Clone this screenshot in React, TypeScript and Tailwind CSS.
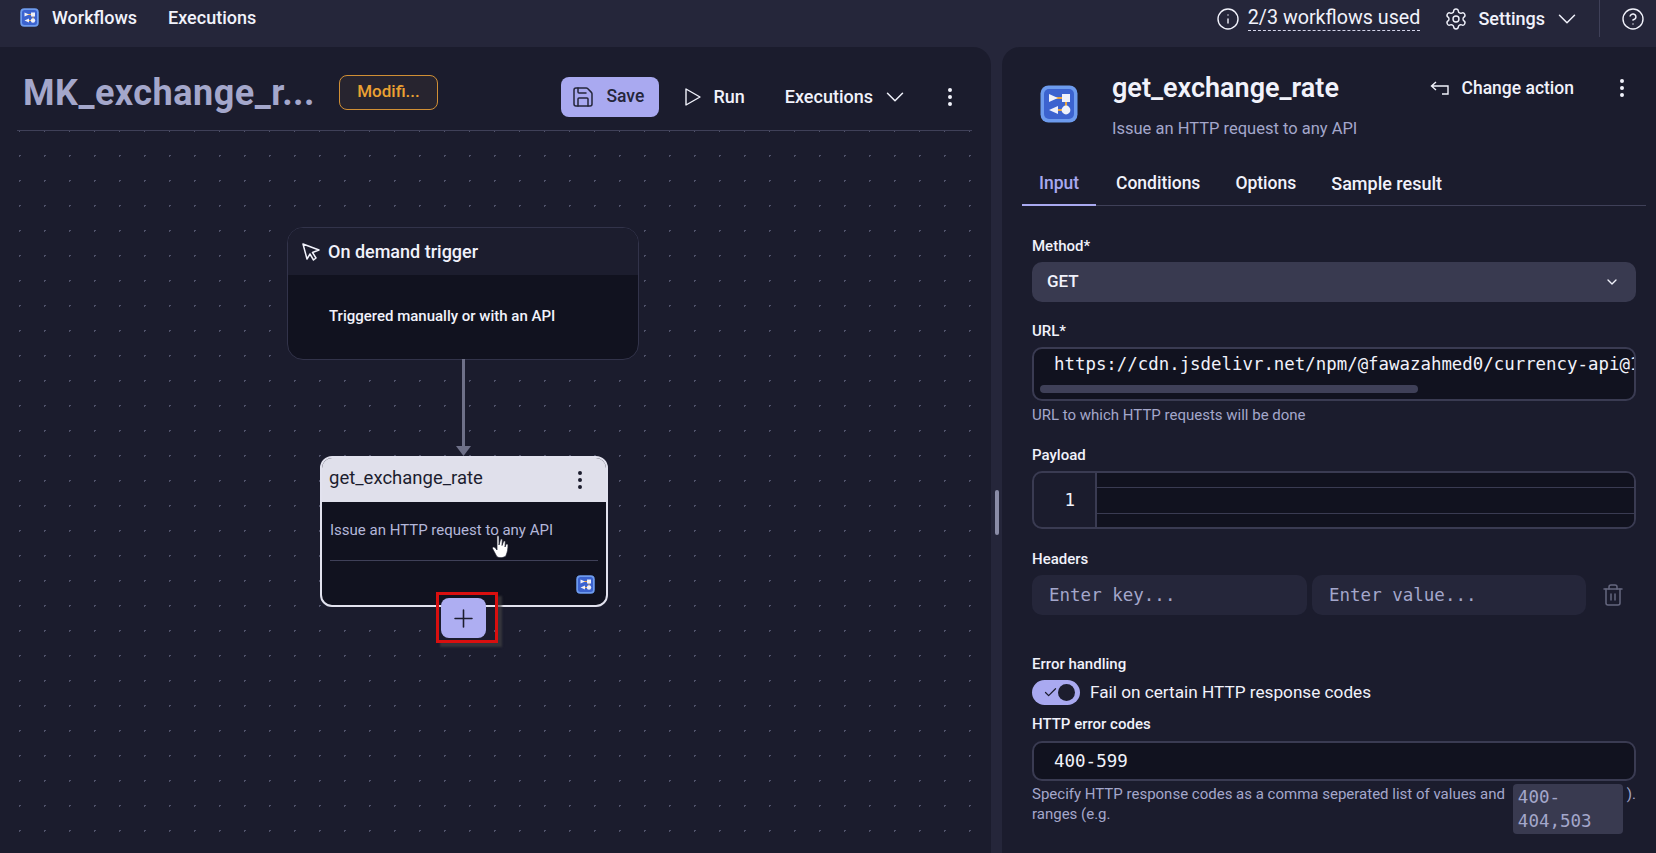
import { Check, ChevronDown, CircleHelp, EllipsisVertical, Info, Plus, Save, Settings, Trash2 } from 'lucide-react'

const sans = "font-['Roboto','Noto_Sans',sans-serif]"
const mono = "font-['DejaVu_Sans_Mono','Liberation_Mono',monospace]"

function Logo({ className }: { className: string }) {
  return (
    <svg className={className} viewBox="0 0 38 38">
      <rect x="0.5" y="0.5" width="37" height="37" rx="8" fill="#6d9bee" />
      <rect x="4" y="4" width="30" height="30" rx="5" fill="#3c63cf" />
      <path d="M15 13H24M26 16V24M15 25H24" stroke="#e8a33d" strokeWidth="2" fill="none" />
      <path d="M9 9L18 13L9 17Z" fill="#eef1fb" />
      <rect x="22" y="9" width="8" height="8" fill="#eef1fb" />
      <path d="M18 21L9 25L18 29Z" fill="#eef1fb" />
      <circle cx="26" cy="25" r="4.4" fill="#eef1fb" />
    </svg>
  )
}

function TopBar() {
  return (
    <div className="flex h-[47px] shrink-0 items-start bg-[#25263a] text-[#f1f2fb]">
      <div className="flex h-[35px] items-center pl-[20px]">
        <Logo className="h-[19px] w-[19px]" />
        <span className="ml-[13px] text-[18px] font-medium">Workflows</span>
        <span className="ml-[31px] text-[18px] font-medium">Executions</span>
      </div>
      <div className="ml-auto flex h-[37px] items-center">
        <Info className="h-[24px] w-[24px]" strokeWidth={1.4} />
        <span className="ml-[8px] border-b border-dashed border-[#d5d6ea] text-[19.7px] leading-[24px]">2/3 workflows used</span>
        <Settings className="ml-[24px] h-[24px] w-[24px]" strokeWidth={1.4} />
        <span className="ml-[10px] text-[18px] font-medium">Settings</span>
        <ChevronDown className="ml-[7px] h-[30px] w-[30px]" strokeWidth={1.2} />
        <div className="ml-[17px] h-[37px] w-px bg-[#3f4058]" />
        <CircleHelp className="ml-[21px] mr-[11px] h-[24px] w-[24px]" strokeWidth={1.4} />
      </div>
    </div>
  )
}

function TriggerNode() {
  return (
    <div className="absolute left-[287px] top-[96px] h-[133px] w-[352px] overflow-hidden rounded-[16px] border border-[#32334a] bg-[#11121f]">
      <div className="flex h-[47px] items-center bg-[#1c1d2e] pl-[13px] text-[#f1f2fb]">
        <svg className="h-[20px] w-[20px]" viewBox="0 0 20 20" fill="none" stroke="currentColor" strokeWidth="1.5">
          <path d="M2 2L18 8L11.5 10.5L15 16L12.5 18L9 12L6 17Z" strokeLinejoin="round" />
        </svg>
        <span className="ml-[7px] text-[18px] font-medium">On demand trigger</span>
      </div>
      <div className="pl-[41px] pt-[30px] text-[15px] font-medium text-[#f1f2fb]">Triggered manually or with an API</div>
    </div>
  )
}

function ActionNode() {
  return (
    <div className="absolute left-[320px] top-[325px] h-[151px] w-[288px] overflow-hidden rounded-[12px] border-2 border-[#e2e2ee] bg-[#11121f]">
      <div className="flex h-[44px] items-center justify-between bg-[#e0e0eb] pl-[7px] pr-[14px] text-[#1c1d2e]">
        <span className="pb-[3px] text-[18.5px]">get_exchange_rate</span>
        <EllipsisVertical className="h-[24px] w-[24px]" />
      </div>
      <div className="mx-[8px] border-b border-[#3f4058] pb-[20px] pt-[18px] text-[15px] leading-[20px] text-[#b4b7da]">Issue an HTTP request to any API</div>
      <div className="flex justify-end pr-[11px] pt-[14px]">
        <Logo className="h-[19px] w-[19px]" />
      </div>
    </div>
  )
}

function Canvas() {
  return (
    <div className="relative flex-1 bg-[radial-gradient(#50526a_1px,transparent_1px)] bg-[size:25px_25px] bg-[position:7px_12px]">
      <TriggerNode />
      <div className="absolute left-[462px] top-[228px] h-[90px] w-[3px] bg-[#6e7088]" />
      <svg className="absolute left-[456px] top-[315px] h-[10px] w-[15px]" viewBox="0 0 15 10">
        <path d="M0 0H15L7.5 10Z" fill="#6e7088" />
      </svg>
      <ActionNode />
      <div className="absolute left-[436px] top-[461px] flex h-[51px] w-[62px] items-start border-[3px] border-[#d90f0f] pl-[2px] pt-[3px] shadow-[4px_4px_2px_rgba(70,70,70,0.6)]">
        <div className="flex h-[40px] w-[45px] items-center justify-center rounded-[8px] bg-[#aeaef2] text-[#1c1d2e]">
          <Plus className="h-[29px] w-[29px]" strokeWidth={1.3} />
        </div>
      </div>
      {/* mouse pointer caught in the screenshot */}
      <svg className="absolute left-[492px] top-[404px] h-[24px] w-[17px]" viewBox="0 0 17 24">
        <path d="M5 1.5C5 .5 7 .5 7 1.5V10L8.5 4.5C9 3.5 10.5 4 10.3 5L10 10.5L11.5 6.5C12 5.5 13.5 6 13.3 7L13 12L14 9.5C14.5 8.7 16 9 16 10C16 14 15.5 17 14 20.5C13 23 5.5 23.5 4.5 21L.5 13.5C0 12 2 11.5 3 12.5L5 15Z" fill="#ffffff" stroke="#1b1c2d" strokeWidth="0.7" />
      </svg>
    </div>
  )
}

function LeftPanel() {
  return (
    <div className="flex w-[991px] shrink-0 flex-col rounded-tr-[18px] bg-[#1b1c2d]">
      <div className="ml-[17px] mr-[19px] flex h-[84px] shrink-0 items-center border-b border-[#3f4058] pl-[6px] pt-[16px]">
        <div className="mb-[8px] flex items-center">
          <span className="text-[36px] font-bold tracking-[0.5px] text-[#a4a7cb]">MK_exchange_r...</span>
          <span className="ml-[24px] mb-[1px] flex h-[35px] w-[99px] items-center justify-center rounded-[8px] border border-[#d08f35] bg-[#27242f] text-[17px] font-medium text-[#eba132]">Modifi...</span>
        </div>
        <div className="ml-auto flex items-center text-[#f1f2fb]">
          <button className="flex h-[40px] w-[98px] items-center rounded-[8px] bg-[#a9a9f0] pl-[10px] text-[#25263a]">
            <Save className="h-[24px] w-[24px]" strokeWidth={1.5} />
            <span className="ml-[11px] text-[17.5px] font-medium">Save</span>
          </button>
          <svg className="ml-[26px] h-[18px] w-[16px]" viewBox="0 0 16 18" fill="none" stroke="currentColor" strokeWidth="1.4">
            <path d="M1 1L15 9L1 17Z" strokeLinejoin="round" />
          </svg>
          <span className="ml-[12px] text-[18px] font-medium">Run</span>
          <span className="ml-[40px] text-[18px] font-medium">Executions</span>
          <ChevronDown className="ml-[7px] h-[30px] w-[30px]" strokeWidth={1.2} />
          <EllipsisVertical className="ml-[28px] mr-[10px] h-[24px] w-[24px]" />
        </div>
      </div>
      <Canvas />
    </div>
  )
}

function Label({ children, className = '' }: { children: string; className?: string }) {
  return <div className={`text-[15px] font-medium leading-[20px] text-[#f1f2fb] ${className}`}>{children}</div>
}

function RightPanel() {
  return (
    <div className="flex min-w-0 flex-1 flex-col rounded-tl-[18px] bg-[#1b1c2d]">
      <div className="flex items-start pl-[38px] pt-[27px]">
        <Logo className="mt-[11px] h-[38px] w-[38px]" />
        <div className="ml-[34px]">
          <div className="text-[27px] font-semibold leading-[28px] text-[#f1f2fb]">get_exchange_rate</div>
          <div className="mt-[16px] text-[16.5px] leading-[22px] text-[#a4a7cb]">Issue an HTTP request to any API</div>
        </div>
        <div className="ml-auto flex h-[28px] items-center pr-[22px] text-[#f1f2fb]">
          <svg className="h-[14px] w-[20px]" viewBox="0 0 20 14" fill="none" stroke="currentColor" strokeWidth="1.4">
            <path d="M6 1L1.5 5L6 9M2 5H18V13H12" />
          </svg>
          <span className="ml-[12px] text-[17.5px] font-medium">Change action</span>
          <EllipsisVertical className="ml-[36px] h-[24px] w-[24px]" />
        </div>
      </div>
      <div className="ml-[20px] mr-[10px] mt-[30px] flex h-[36px] items-start border-b border-[#3f4058] text-[17.5px] font-medium text-[#f1f2fb]">
        <span className="h-[36px] w-[74px] border-b-2 border-[#a9a9f0] text-center text-[#a9a9f0]">Input</span>
        <span className="ml-[20px]">Conditions</span>
        <span className="ml-[35px]">Options</span>
        <span className="ml-[35px] text-[18px]">Sample result</span>
      </div>
      <div className="ml-[30px] mr-[20px]">
        <Label className="mt-[30px]">Method*</Label>
        <div className="mt-[6px] flex h-[40px] items-center justify-between rounded-[10px] bg-[#393a50] pl-[15px] pr-[16px] text-[17px] font-medium text-[#f1f2fb]">
          GET
          <ChevronDown className="h-[16px] w-[16px]" />
        </div>
        <Label className="mt-[19px]">URL*</Label>
        <div className={`relative mt-[6px] h-[54px] overflow-hidden rounded-[10px] border-2 border-[#3a3b52] bg-[#11121f] pl-[20px] pt-[5px] text-[17.4px] leading-[20px] whitespace-nowrap text-[#f1f2fb] ${mono}`}>
          https://cdn.jsdelivr.net/npm/@fawazahmed0/currency-api@1
          <div className="ml-[-14px] mt-[11px] h-[8px] w-[378px] rounded-full bg-[#3f4058]" />
        </div>
        <div className="mt-[4px] text-[15px] leading-[20px] text-[#a4a7cb]">URL to which HTTP requests will be done</div>
        <Label className="mt-[20px]">Payload</Label>
        <div className="mt-[6px] flex h-[58px] overflow-hidden rounded-[10px] border-2 border-[#3a3b52] bg-[#1b1c2d]">
          <div className={`flex w-[63px] items-center justify-end border-r-2 border-[#3a3b52] pr-[20px] text-[17.5px] text-[#f1f2fb] ${mono}`}>1</div>
          <div className="flex flex-1 flex-col bg-[#11121f]">
            <div className="h-[14px]" />
            <div className="h-[27px] border-y border-[#3a3b52]" />
          </div>
        </div>
        <Label className="mt-[20px]">Headers</Label>
        <div className="mt-[6px] flex items-center">
          <div className={`flex h-[40px] w-[275px] items-center rounded-[10px] bg-[#25263a] pl-[17px] text-[17.5px] text-[#a4a7cb] ${mono}`}>Enter key...</div>
          <div className={`ml-[5px] flex h-[40px] w-[274px] items-center rounded-[10px] bg-[#25263a] pl-[17px] text-[17.5px] text-[#a4a7cb] ${mono}`}>Enter value...</div>
          <Trash2 className="ml-[15px] h-[24px] w-[24px] text-[#65677f]" strokeWidth={1.5} />
        </div>
        <Label className="mt-[39px]">Error handling</Label>
        <div className="mt-[6px] flex items-center">
          <div className="flex h-[25px] w-[48px] items-center rounded-full bg-[#a9a9f0] pl-[11px] text-[#1c1d2e]">
            <Check className="h-[15px] w-[15px]" strokeWidth={2} />
            <div className="h-[17px] w-[17px] rounded-full bg-[#1c1d2e]" />
          </div>
          <span className="ml-[10px] text-[17.2px] text-[#f1f2fb]">Fail on certain HTTP response codes</span>
        </div>
        <Label className="mt-[8px]">HTTP error codes</Label>
        <div className={`mt-[7px] flex h-[40px] items-center rounded-[10px] border-2 border-[#3a3b52] bg-[#11121f] pl-[20px] text-[17.5px] text-[#f1f2fb] ${mono}`}>400-599</div>
        <div className="mt-[3px] flex items-start text-[15px] leading-[20px] text-[#a4a7cb]">
          <div className="w-[481px]">Specify HTTP response codes as a comma seperated list of values and ranges (e.g.</div>
          <div className={`w-[110px] rounded-[4px] bg-[#393a50] px-[5px] py-[1px] text-[17.5px] leading-[24px] ${mono}`}>400-<br />404,503</div>
          <span className="ml-[4px]">).</span>
        </div>
      </div>
    </div>
  )
}

export default function App() {
  return (
    <div className={`flex h-[853px] w-[1656px] flex-col overflow-hidden bg-[#25263a] ${sans}`}>
      <TopBar />
      <div className="flex min-h-0 flex-1">
        <LeftPanel />
        <div className="flex w-[11px] shrink-0 justify-center pt-[443px]">
          <div className="h-[45px] w-[4px] rounded-full bg-[#8a8ca6]" />
        </div>
        <RightPanel />
      </div>
    </div>
  )
}
